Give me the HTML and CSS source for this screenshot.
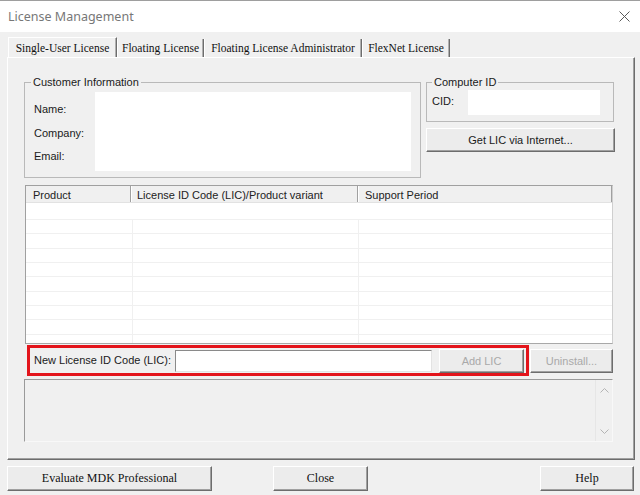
FILE: index.html
```html
<!DOCTYPE html>
<html lang="en">
<head>
<meta charset="utf-8">
<title>License Management</title>
<link rel="stylesheet" href="styles.css">
</head>
<body>
<header class="titlebar">
  <span class="title">License Management</span>
  <svg class="close-icon" viewBox="0 0 11 11" width="11" height="11"><path d="M0.5 0.5 L10.5 10.5 M10.5 0.5 L0.5 10.5" stroke="#5a5a5a" stroke-width="1" fill="none"/></svg>
</header>
<div class="main">
  <nav class="tabs">
    <div class="tab active tab-single">Single-User License</div>
    <div class="tab tab-floating">Floating License</div>
    <div class="tab tab-admin">Floating License Administrator</div>
    <div class="tab tab-flexnet">FlexNet License</div>
  </nav>
  <section class="panel">
    <div class="top-row">
      <fieldset class="group customer">
        <legend>Customer Information</legend>
        <div class="ci-body">
          <div class="ci-labels">
            <span>Name:</span>
            <span>Company:</span>
            <span>Email:</span>
          </div>
          <div class="white ci-field"></div>
        </div>
      </fieldset>
      <div class="right-col">
        <fieldset class="group computer">
          <legend>Computer ID</legend>
          <div class="cid-body">
            <span class="cid-label">CID:</span>
            <div class="white cid-field"></div>
          </div>
        </fieldset>
        <button class="btn getlic">Get LIC via Internet...</button>
      </div>
    </div>

    <div class="list">
      <div class="list-head">
        <div class="hcell h1">Product</div>
        <div class="hcell h2">License ID Code (LIC)/Product variant</div>
        <div class="hcell h3">Support Period</div>
      </div>
      <div class="list-body">
        <div class="first-row"></div>
        <div class="row"><div class="cell c1"></div><div class="cell c2"></div><div class="cell c3"></div></div>
        <div class="row"><div class="cell c1"></div><div class="cell c2"></div><div class="cell c3"></div></div>
        <div class="row"><div class="cell c1"></div><div class="cell c2"></div><div class="cell c3"></div></div>
        <div class="row"><div class="cell c1"></div><div class="cell c2"></div><div class="cell c3"></div></div>
        <div class="row"><div class="cell c1"></div><div class="cell c2"></div><div class="cell c3"></div></div>
        <div class="row"><div class="cell c1"></div><div class="cell c2"></div><div class="cell c3"></div></div>
        <div class="row"><div class="cell c1"></div><div class="cell c2"></div><div class="cell c3"></div></div>
        <div class="row"><div class="cell c1"></div><div class="cell c2"></div><div class="cell c3"></div></div>
        <div class="row"><div class="cell c1"></div><div class="cell c2"></div><div class="cell c3"></div></div>
      </div>
    </div>

    <div class="lic-row">
      <div class="highlight">
        <label class="lic-label">New License ID Code (LIC):</label>
        <div class="input"></div>
        <button class="btn disabled addlic">Add LIC</button>
      </div>
      <button class="btn disabled uninstall">Uninstall...</button>
    </div>

    <div class="log">
      <div class="log-text"></div>
      <div class="scroll">
        <svg viewBox="0 0 9 5" width="9" height="5"><path d="M0.5 4.5 L4.5 0.5 L8.5 4.5" stroke="#b4b4b4" fill="none"/></svg>
        <svg viewBox="0 0 9 5" width="9" height="5"><path d="M0.5 0.5 L4.5 4.5 L8.5 0.5" stroke="#b4b4b4" fill="none"/></svg>
      </div>
    </div>
  </section>
  <footer class="footer">
    <button class="btn serif evaluate">Evaluate MDK Professional</button>
    <button class="btn serif closebtn">Close</button>
    <button class="btn serif help">Help</button>
  </footer>
</div>
</body>
</html>
```
FILE: styles.css
```css
* { box-sizing: border-box; }
html, body { margin: 0; padding: 0; }
body {
  width: 640px;
  height: 495px;
  overflow: hidden;
  background: #f0f0f0;
  font-family: "Liberation Sans", Arial, sans-serif;
  font-size: 11px;
  color: #1a1a1a;
}

/* title bar */
.titlebar {
  height: 32px;
  background: #fff;
  border-top: 1px solid #9e9e9e;
  display: flex;
  align-items: center;
  justify-content: space-between;
  padding: 0 10px 0 8px;
}
.title {
  font-family: "Noto Sans", "Open Sans", sans-serif;
  font-size: 12.5px;
  color: #777;
}
.close-icon { display: block; }

.main { padding: 0 6px 0 7px; }

/* tabs */
.tabs {
  display: flex;
  align-items: flex-end;
  height: 20px;
  margin: 5px 0 0 1px;
  font-family: "Liberation Serif", "Times New Roman", serif;
  font-size: 11.5px;
  color: #111;
}
.tab {
  height: 18px;
  display: flex;
  align-items: center;
  justify-content: center;
  border-left: 1px solid #fff;
  border-right: 1px solid #6d6d6d;
  box-shadow: inset -1px 0 #b0b0b0;
}
.tab.active {
  height: 20px;
  border-top: 1px solid #fff;
}
.tab-single { width: 109px; }
.tab-floating { width: 87px; }
.tab-admin { width: 158px; }
.tab-flexnet { width: 88px; }

/* panel */
.panel {
  width: 628px;
  height: 403px;
  border: 1px solid;
  border-color: #fff #6d6d6d #6d6d6d #fff;
  box-shadow: inset -1px -1px #a0a0a0;
  padding: 18px 0 0 16px;
}

.top-row {
  display: flex;
  align-items: flex-start;
}

.group {
  margin: 0;
  border: 1px solid #b9b9b9;
  min-width: 0;
}
.group legend {
  font-size: 11px;
  line-height: 13px;
  padding: 0 2px;
}
.white { background: #fff; }

.customer {
  width: 397px;
  height: 102px;
  padding: 3px 9px 6px 9px;
}
.customer legend { margin-left: -3px; }
.ci-body { display: flex; }
.ci-labels {
  width: 61px;
  display: flex;
  flex-direction: column;
  padding-top: 6px;
}
.ci-labels span { line-height: 23.5px; }
.ci-field { width: 316px; height: 79px; }

.right-col {
  margin-left: 5px;
  display: flex;
  flex-direction: column;
}
.computer {
  width: 188px;
  height: 46px;
  padding: 1px 13px 6px 5px;
}
.cid-body { display: flex; }
.cid-label { width: 36px; padding-top: 5px; line-height: 13px; }
.cid-field { width: 132px; height: 25px; }

/* buttons */
.btn {
  font: inherit;
  color: #1a1a1a;
  background: #ececec;
  border: 1px solid;
  border-color: #fff #6d6d6d #6d6d6d #fff;
  box-shadow: inset -1px -1px #a0a0a0;
  padding: 0;
  margin: 0;
}
.btn.disabled { color: #a9a9a9; }
.btn.serif {
  font-family: "Liberation Serif", "Times New Roman", serif;
  font-size: 12px;
  color: #111;
}
.getlic {
  margin-top: 6px;
  width: 189px;
  height: 24px;
}

/* list */
.list {
  margin: 7px 0 0 1px;
  width: 588px;
  height: 159px;
  border: 1px solid;
  border-color: #a0a0a0 #cfcfcf #a8a8a8 #a0a0a0;
  background: #fff;
  overflow: hidden;
}
.list-head {
  display: flex;
  height: 17px;
  background: #f0f0f0;
  border-bottom: 1px solid #e2e2e2;
}
.hcell {
  line-height: 15px;
  padding-top: 2px;
  border-right: 1px solid #a0a0a0;
  box-shadow: 1px 0 #fff;
  color: #222;
}
.h1 { width: 105px; padding-left: 7px; }
.h2 { width: 227px; padding-left: 6px; }
.h3 { width: 254px; padding-left: 7px; }

.list-body {
  height: 140px;
  overflow: hidden;
}
.first-row {
  height: 17px;
  border-bottom: 1px solid #f0f0f0;
}
.row {
  display: flex;
  height: 14.33px;
  border-bottom: 1px solid #f0f0f0;
}
.cell { height: 100%; }
.c1 { width: 107px; border-right: 1px solid #f0f0f0; }
.c2 { width: 226px; border-right: 1px solid #f0f0f0; }
.c3 { flex: 1; }

/* LIC row */
.lic-row {
  display: flex;
  align-items: flex-start;
  margin-top: 1px;
}
.highlight {
  margin-left: 3px;
  width: 502px;
  height: 31px;
  border: 3px solid #e3141b;
  display: flex;
  align-items: flex-start;
}
.lic-label {
  width: 145px;
  padding-left: 4px;
  line-height: 24px;
}
.input {
  margin-top: 2px;
  width: 257px;
  height: 22px;
  background: #fff;
  border: 1px solid;
  border-color: #8a8a8a #e3e3e3 #e3e3e3 #8a8a8a;
}
.addlic {
  margin: 1px 0 0 7px;
  width: 85px;
  height: 24px;
}
.uninstall {
  margin: 4px 0 0 1px;
  width: 83px;
  height: 24px;
}

/* log */
.log {
  display: flex;
  margin-top: 3px;
  width: 589px;
  height: 63px;
  border: 1px solid;
  border-color: #9a9a9a #f8f8f8 #f8f8f8 #9a9a9a;
}
.log-text { flex: 1; }
.scroll {
  width: 17px;
  border-left: 1px solid #e6e6e6;
  display: flex;
  flex-direction: column;
  align-items: center;
  justify-content: space-between;
  padding: 8px 0 7px;
}
.scroll svg { display: block; }

/* footer */
.footer {
  display: flex;
  margin-top: 6px;
}
.footer .btn { height: 25px; }
.evaluate { width: 205px; }
.closebtn { width: 95px; margin-left: 61px; }
.help { width: 94px; margin-left: auto; }
```
